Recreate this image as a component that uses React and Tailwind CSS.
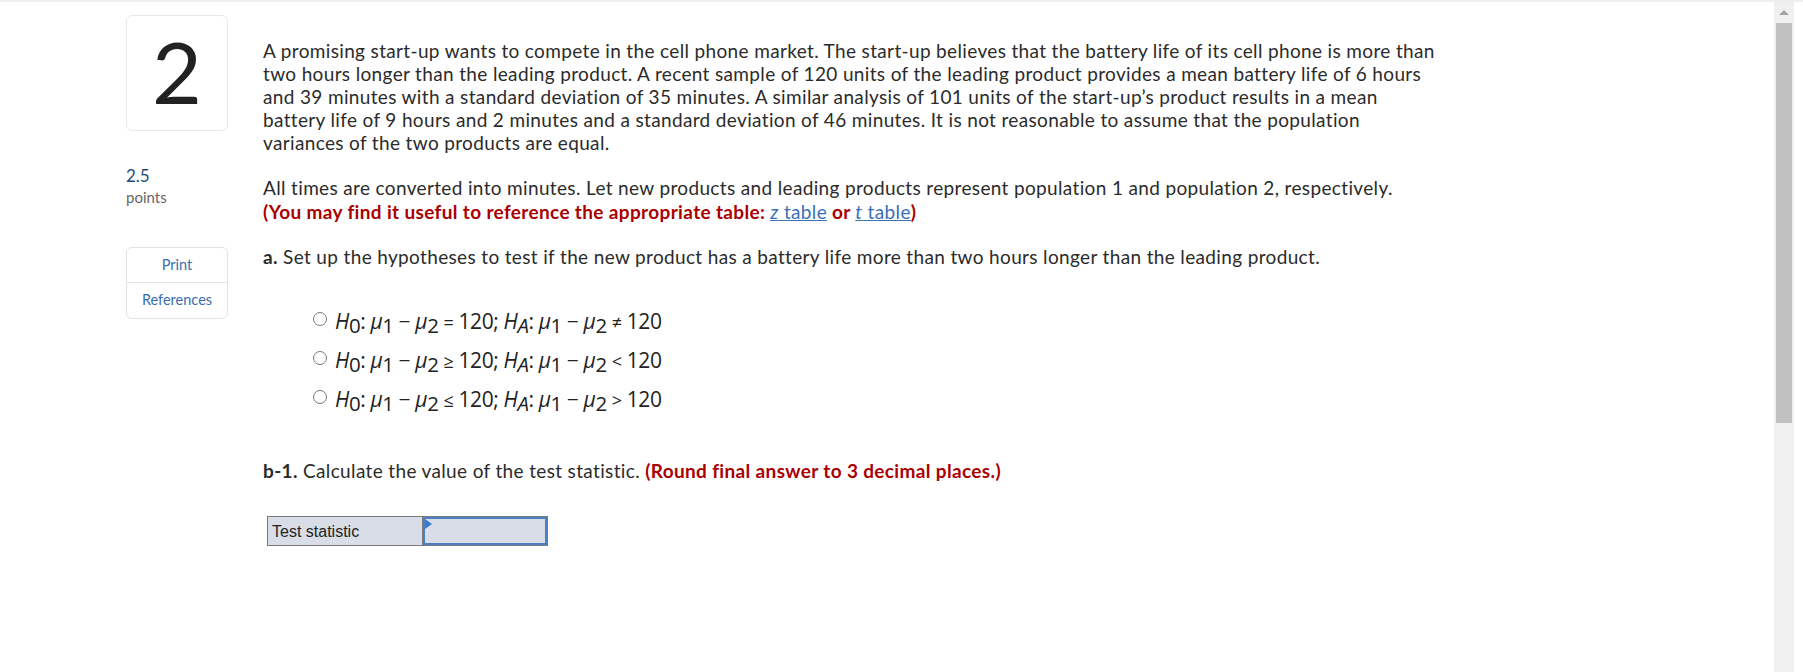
import React from 'react';

const font = { fontFamily: 'Lato, "Open Sans", sans-serif' };

const Mu = ({ sub }) => (
    <span>
        <i>μ</i>
        <sub className="text-[20.5px] relative top-[4px] align-baseline">{sub}</sub>
    </span>
);

const Hyp = ({ h0, ha }) => (
    <span className="font-['Open_Sans',sans-serif] text-[21px] tracking-[-0.4px] text-[#222]">
        <i>H</i>
        <sub className="text-[20.5px] relative top-[4px] align-baseline">0</sub>: <Mu sub="1" /> − <Mu sub="2" />{' '}
        <span className="text-[18px]">{h0}</span> 120; <i>H</i>
        <sub className="text-[20.5px] relative top-[4px] align-baseline"><i>A</i></sub>: <Mu sub="1" /> − <Mu sub="2" />{' '}
        <span className="text-[18px]">{ha}</span> 120
    </span>
);

const options = [
    { h0: '=', ha: '≠' },
    { h0: '≥', ha: '<' },
    { h0: '≤', ha: '>' },
];

export default function App() {
    return (
        <div className="flex min-h-[672px] w-full border-t-2 border-[#eeeeee] bg-white" style={font}>
            <div className="flex flex-1 pl-[126px] pt-[13px]">
                {/* Left column */}
                <aside className="w-[102px] shrink-0">
                    <div className="flex h-[116px] items-center justify-center rounded-[6px] border border-[#e8e8e8] text-[86px] leading-none text-[#222]">
                        <span className="-mt-[4px]">2</span>
                    </div>
                    <div className="mt-[35px] text-[17px] leading-[20px] text-[#1f4a7a]">2.5</div>
                    <div className="mt-[2px] text-[15px] leading-[18px] text-[#666]">points</div>
                    <div className="mt-[41px] rounded-[6px] border border-[#e3e3e3] text-center text-[14.5px] text-[#3a6db0]">
                        <div className="h-[35px] leading-[34px] border-b border-[#e3e3e3]">Print</div>
                        <div className="h-[35px] leading-[34px]">References</div>
                    </div>
                </aside>

                {/* Question body */}
                <main className="ml-[35px] pt-[24px] text-[19px] leading-[23px] tracking-[0.35px] text-[#2b2b2b]">
                    <p className="whitespace-nowrap">
                        A promising start-up wants to compete in the cell phone market. The start-up believes that the battery life of its cell phone is more than<br />
                        two hours longer than the leading product. A recent sample of 120 units of the leading product provides a mean battery life of 6 hours<br />
                        and 39 minutes with a standard deviation of 35 minutes. A similar analysis of 101 units of the start-up’s product results in a mean<br />
                        battery life of 9 hours and 2 minutes and a standard deviation of 46 minutes. It is not reasonable to assume that the population<br />
                        variances of the two products are equal.
                    </p>
                    <p className="mt-[22px] whitespace-nowrap leading-[24px]">
                        All times are converted into minutes. Let new products and leading products represent population 1 and population 2, respectively.<br />
                        <span className="font-bold text-[#aa0000]">
                            (You may find it useful to reference the appropriate table:{' '}
                            <a className="font-normal text-[#3b6fb6] underline"><i>z</i> table</a> or{' '}
                            <a className="font-normal text-[#3b6fb6] underline"><i>t</i> table</a>)
                        </span>
                    </p>
                    <p className="mt-[21px] whitespace-nowrap">
                        <b>a.</b> Set up the hypotheses to test if the new product has a battery life more than two hours longer than the leading product.
                    </p>

                    <div className="mt-[40px] ml-[50px] flex flex-col gap-[12px]">
                        {options.map((o, i) => (
                            <label key={i} className="flex h-[27px] items-center gap-[8px] tracking-normal">
                                <span className="-mt-[6px] h-[14px] w-[14px] shrink-0 rounded-full border border-[#777] bg-white" />
                                <Hyp h0={o.h0} ha={o.ha} />
                            </label>
                        ))}
                    </div>

                    <p className="mt-[46px] whitespace-nowrap">
                        <b>b-1.</b> Calculate the value of the test statistic.{' '}
                        <span className="font-bold text-[#aa0000]">(Round final answer to 3 decimal places.)</span>
                    </p>

                    <div className="mt-[34px] ml-[4px] flex h-[30px] w-[281px] border border-[#7a7a7a] bg-[#d9dde7] tracking-normal">
                        <div className="flex w-[155px] items-center border-r border-[#7a7a7a] pl-[4px] font-['Liberation_Sans',sans-serif] text-[16px] text-[#222]">
                            Test statistic
                        </div>
                        <div className="relative flex-1 border-2 border-[#4b7fc4]">
                            <span className="absolute left-0 top-0 h-0 w-0 border-l-[7px] border-b-[5px] border-t-[5px] border-l-[#3b78d0] border-b-transparent border-t-transparent" />
                        </div>
                    </div>
                </main>
            </div>

            {/* Scrollbar */}
            <div className="flex w-[20px] shrink-0 flex-col items-center bg-[#f0f0f0]">
                <div className="flex h-[21px] w-full items-center justify-center">
                    <span className="h-0 w-0 border-x-[5px] border-b-[5px] border-x-transparent border-b-[#a3a3a3]" />
                </div>
                <div className="h-[400px] w-[16px] bg-[#c1c1c1]" />
            </div>
            <div className="w-[9px] shrink-0 bg-white" />
        </div>
    );
}
